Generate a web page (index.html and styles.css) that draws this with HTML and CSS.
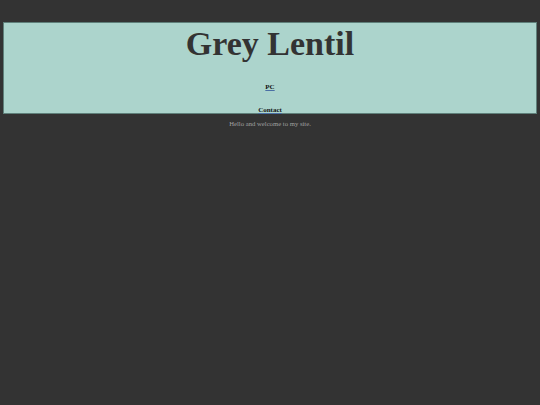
FILE: index.html
```html
<!DOCTYPE html>
<html>
<head>
<meta charset="utf-8">
<link rel="stylesheet" href="styles.css">
</head>
<body>
<header class="site-header">
  <h1 class="title">Grey Lentil</h1>
  <nav class="nav">
    <a class="nav-link" href="#">PC</a>
    <a class="nav-link" href="#">Contact</a>
  </nav>
</header>
<p class="welcome">Hello and welcome to my site.</p>
</body>
</html>
```
FILE: styles.css
```css
html, body {
  margin: 0;
  padding: 0;
  background: #333333;
  font-family: "Liberation Serif", "Times New Roman", serif;
}
.site-header {
  margin: 22px 3px 0;
  border: 1px solid #5f807a;
  background: #acd4cc;
  text-align: center;
  height: 90px;
}
.title {
  margin: 0;
  padding-top: 3px;
  font-size: 34px;
  line-height: 36px;
  color: #333333;
  font-weight: bold;
}
.nav {
  display: flex;
  flex-direction: column;
  align-items: center;
  gap: 13px;
  padding-top: 20px;
}
.nav-link {
  font-size: 7px;
  line-height: 10px;
  font-weight: bold;
  color: #111111;
  text-decoration: underline;
  text-decoration-color: #4a6fa5;
}
.welcome {
  margin: 4px 0 0;
  text-align: center;
  font-size: 6.7px;
  line-height: 12px;
  color: #a0a0a0;
}
```
